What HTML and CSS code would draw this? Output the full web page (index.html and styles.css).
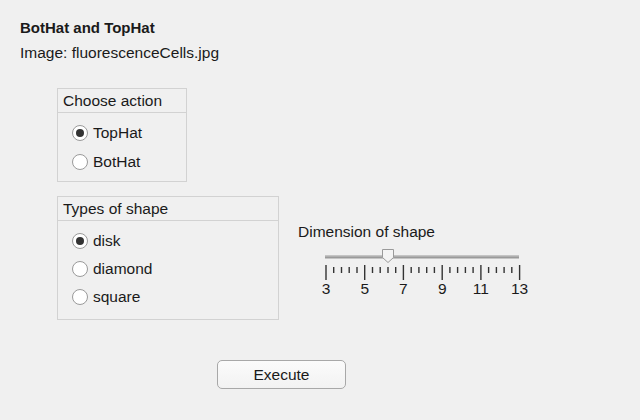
FILE: index.html
```html
<!DOCTYPE html>
<html>
<head>
<meta charset="utf-8">
<link rel="stylesheet" href="styles.css">
</head>
<body>
<div class="app">
  <div class="title">BotHat and TopHat</div>
  <div class="subtitle">Image: fluorescenceCells.jpg</div>
  <div class="main">
    <div class="panels">
      <div class="panel panel-action">
        <div class="panel-head">Choose action</div>
        <div class="panel-body">
          <div class="radio"><span class="dot on"></span><span>TopHat</span></div>
          <div class="radio"><span class="dot"></span><span>BotHat</span></div>
        </div>
      </div>
      <div class="panel panel-shape">
        <div class="panel-head">Types of shape</div>
        <div class="panel-body">
          <div class="radio"><span class="dot on"></span><span>disk</span></div>
          <div class="radio"><span class="dot"></span><span>diamond</span></div>
          <div class="radio"><span class="dot"></span><span>square</span></div>
        </div>
      </div>
    </div>
    <div class="slider-group">
      <div class="slider-label">Dimension of shape</div>
      <svg class="slider" width="240" height="60" viewBox="0 0 240 60">
        <rect x="27" y="9.5" width="194" height="3" fill="#9a9a9a"/>
        <rect x="27" y="9.5" width="194" height="1" fill="#c4c4c4"/>
        <g stroke="#333" stroke-width="1.4">
          <line x1="28" y1="19" x2="28" y2="34"/>
          <line x1="35.7" y1="21" x2="35.7" y2="27"/>
          <line x1="43.5" y1="21" x2="43.5" y2="27"/>
          <line x1="51.2" y1="21" x2="51.2" y2="27"/>
          <line x1="59" y1="21" x2="59" y2="27"/>
          <line x1="66.7" y1="19" x2="66.7" y2="34"/>
          <line x1="74.5" y1="21" x2="74.5" y2="27"/>
          <line x1="82.2" y1="21" x2="82.2" y2="27"/>
          <line x1="90" y1="21" x2="90" y2="27"/>
          <line x1="97.7" y1="21" x2="97.7" y2="27"/>
          <line x1="105.4" y1="19" x2="105.4" y2="34"/>
          <line x1="113.2" y1="21" x2="113.2" y2="27"/>
          <line x1="120.9" y1="21" x2="120.9" y2="27"/>
          <line x1="128.7" y1="21" x2="128.7" y2="27"/>
          <line x1="136.4" y1="21" x2="136.4" y2="27"/>
          <line x1="144.2" y1="19" x2="144.2" y2="34"/>
          <line x1="151.9" y1="21" x2="151.9" y2="27"/>
          <line x1="159.6" y1="21" x2="159.6" y2="27"/>
          <line x1="167.4" y1="21" x2="167.4" y2="27"/>
          <line x1="175.1" y1="21" x2="175.1" y2="27"/>
          <line x1="182.9" y1="19" x2="182.9" y2="34"/>
          <line x1="190.6" y1="21" x2="190.6" y2="27"/>
          <line x1="198.4" y1="21" x2="198.4" y2="27"/>
          <line x1="206.1" y1="21" x2="206.1" y2="27"/>
          <line x1="213.8" y1="21" x2="213.8" y2="27"/>
          <line x1="221.6" y1="19" x2="221.6" y2="34"/>
        </g>
        <path d="M84.5 3.5 H95.5 V11.5 L90 16.5 L84.5 11.5 Z" fill="#f4f4f4" stroke="#9a9a9a" stroke-width="1"/>
        <g class="ticklabels" font-size="15.5" text-anchor="middle" fill="#1a1a1a">
          <text x="28" y="47.5">3</text>
          <text x="66.7" y="47.5">5</text>
          <text x="105.4" y="47.5">7</text>
          <text x="144.2" y="47.5">9</text>
          <text x="182.9" y="47.5">11</text>
          <text x="221.6" y="47.5">13</text>
        </g>
      </svg>
    </div>
  </div>
  <div class="actions">
    <button class="btn">Execute</button>
  </div>
</div>
</body>
</html>
```

FILE: styles.css
```css
html, body {
  margin: 0;
  padding: 0;
  background: #f0f0f0;
}
body {
  width: 640px;
  height: 420px;
  overflow: hidden;
  font-family: "Liberation Sans", Arial, sans-serif;
  font-size: 15.5px;
  color: #1a1a1a;
}
.app {
  padding: 19px 0 0 20px;
}
.title {
  font-weight: bold;
  font-size: 15px;
  line-height: 18px;
}
.subtitle {
  margin-top: 7px;
  line-height: 18px;
}
.main {
  display: flex;
  margin-top: 26px;
  padding-left: 37px;
}
.panels {
  display: flex;
  flex-direction: column;
  gap: 14px;
}
.panel {
  border: 1px solid #d2d2d2;
  box-sizing: border-box;
}
.panel-action {
  width: 130px;
  height: 94px;
}
.panel-shape {
  width: 222px;
  height: 124px;
}
.panel-head {
  height: 24px;
  line-height: 24px;
  padding-left: 5px;
  border-bottom: 1px solid #d2d2d2;
  box-sizing: border-box;
}
.panel-body {
  padding: 5px 0 0 14px;
}
.panel-shape .panel-body {
  padding-top: 6px;
}
.radio {
  display: flex;
  align-items: center;
  gap: 5px;
  height: 29px;
  line-height: 18px;
}
.panel-shape .radio {
  height: 28px;
}
.dot {
  width: 16px;
  height: 16px;
  border: 1px solid #9a9a9a;
  border-radius: 50%;
  background: #fff;
  box-sizing: border-box;
  display: flex;
  align-items: center;
  justify-content: center;
}
.dot.on::after {
  content: "";
  width: 8px;
  height: 8px;
  border-radius: 50%;
  background: #333;
}
.slider-group {
  margin-left: 19px;
  margin-top: 135px;
}
.slider-label {
  line-height: 18px;
}
.slider {
  display: block;
  margin-top: 5px;
  font-family: "Liberation Sans", Arial, sans-serif;
}
.actions {
  padding-left: 197px;
  margin-top: 40px;
}
.btn {
  width: 129px;
  height: 29px;
  border: 1px solid #a8a8a8;
  border-radius: 5px;
  background: linear-gradient(#fbfbfb, #f2f2f2);
  font-family: "Liberation Sans", Arial, sans-serif;
  font-size: 15.5px;
  color: #1a1a1a;
  padding: 0;
}
```
